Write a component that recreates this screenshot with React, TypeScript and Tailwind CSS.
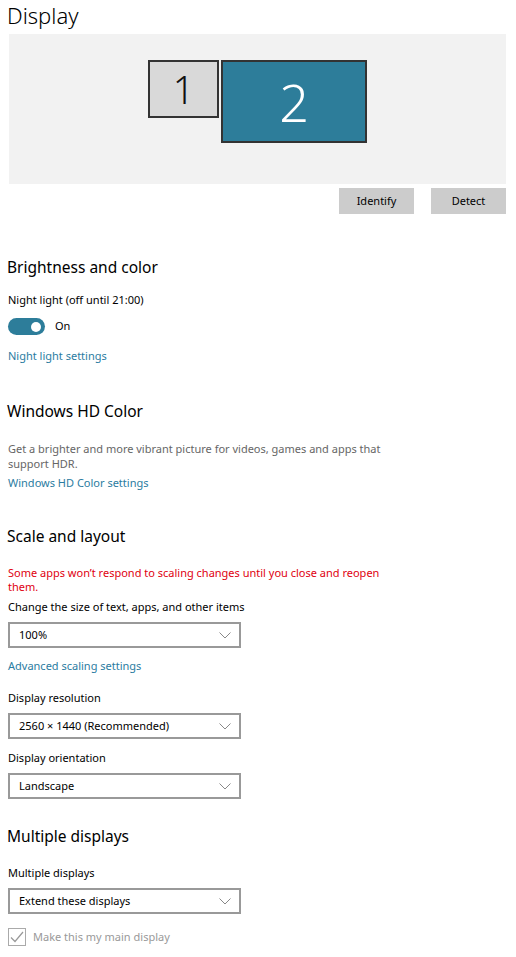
import React from "react";

const font = { fontFamily: '"Segoe UI", "Noto Sans", "Open Sans", sans-serif' };

function Chevron() {
  return (
    <svg width="12" height="7" viewBox="0 0 12 7" fill="none">
      <path d="M0.5 0.5 L6 6 L11.5 0.5" stroke="#888" strokeWidth="1" />
    </svg>
  );
}

function Dropdown({ value, mt }: { value: string; mt: string }) {
  return (
    <div
      className={`${mt} ml-[8px] w-[233px] h-[26px] border-2 border-[#999999] bg-white flex items-center justify-between pl-[9px] pr-[8px] text-[11px] text-black`}
    >
      <span>{value}</span>
      <Chevron />
    </div>
  );
}

export default function App() {
  return (
    <div className="w-[516px] h-[957px] bg-white text-black overflow-hidden" style={font}>
      <div className="h-[34px] pl-[7px] text-[22px] leading-[30px] font-light">Display</div>
      <div className="ml-[9px] w-[497px] h-[150px] bg-[#f2f2f2] flex items-start pt-[26px] pl-[139px] gap-[2px]">
        <div className="w-[71px] h-[58px] border-2 border-[#333333] bg-[#d9d9d9] flex items-center justify-center text-[38px] font-light leading-none text-[#111]">
          1
        </div>
        <div className="w-[146px] h-[83px] border-2 border-[#333333] bg-[#2d7d9a] flex items-center justify-center text-[52px] font-light leading-none text-white">
          2
        </div>
      </div>
      <div className="mt-[4px] h-[26px] flex justify-end pr-[10px] gap-[17px]">
        <div className="w-[75px] h-[26px] bg-[#cccccc] flex items-center justify-center text-[11px]">Identify</div>
        <div className="w-[75px] h-[26px] bg-[#cccccc] flex items-center justify-center text-[11px]">Detect</div>
      </div>

      <div className="mt-[38px] h-[30px] leading-[30px] pl-[7px] text-[15.5px]">Brightness and color</div>
      <div className="mt-[8px] h-[20px] leading-[20px] pl-[8px] text-[11px]">Night light (off until 21:00)</div>
      <div className="mt-[8px] h-[17px] flex items-center pl-[8px]">
        <div className="w-[37px] h-[17px] rounded-full bg-[#2d7d9a] flex items-center justify-end pr-[4px]">
          <div className="w-[10px] h-[10px] rounded-full bg-white" />
        </div>
        <span className="ml-[10px] text-[11px]">On</span>
      </div>
      <div className="mt-[11px] h-[20px] leading-[20px] pl-[8px] text-[11px] text-[#2b7ca1]">Night light settings</div>

      <div className="mt-[30px] h-[30px] leading-[30px] pl-[7px] text-[15.5px]">Windows HD Color</div>
      <div className="mt-[15px] pl-[8px] whitespace-nowrap text-[11px] leading-[15px] text-[#666666]">
        Get a brighter and more vibrant picture for videos, games and apps that
        <br />
        support HDR.
      </div>
      <div className="mt-[2px] h-[20px] leading-[20px] pl-[8px] text-[11px] text-[#2b7ca1]">Windows HD Color settings</div>

      <div className="mt-[28px] h-[30px] leading-[30px] pl-[7px] text-[15.5px]">Scale and layout</div>
      <div className="mt-[15px] pl-[8px] whitespace-nowrap text-[11px] leading-[14px] text-[#e00010]">
        Some apps won’t respond to scaling changes until you close and reopen
        <br />
        them.
      </div>
      <div className="mt-[3px] h-[20px] leading-[20px] pl-[8px] text-[11px]">Change the size of text, apps, and other items</div>
      <Dropdown value="100%" mt="mt-[5px]" />
      <div className="mt-[8px] h-[20px] leading-[20px] pl-[8px] text-[11px] text-[#2b7ca1]">Advanced scaling settings</div>
      <div className="mt-[12px] h-[20px] leading-[20px] pl-[8px] text-[11px]">Display resolution</div>
      <Dropdown value="2560 × 1440 (Recommended)" mt="mt-[5px]" />
      <div className="mt-[9px] h-[20px] leading-[20px] pl-[8px] text-[11px]">Display orientation</div>
      <Dropdown value="Landscape" mt="mt-[5px]" />

      <div className="mt-[22px] h-[30px] leading-[30px] pl-[7px] text-[15.5px]">Multiple displays</div>
      <div className="mt-[12px] h-[20px] leading-[20px] pl-[8px] text-[11px]">Multiple displays</div>
      <Dropdown value="Extend these displays" mt="mt-[5px]" />
      <div className="mt-[14px] h-[18px] flex items-center pl-[8px]">
        <div className="w-[18px] h-[18px] border border-[#aaaaaa] flex items-center justify-center">
          <svg width="14" height="12" viewBox="0 0 14 12" fill="none">
            <path d="M1 6.5 L5 10.5 L13 1" stroke="#999999" strokeWidth="1.2" />
          </svg>
        </div>
        <span className="ml-[7px] text-[11px] text-[#999999]">Make this my main display</span>
      </div>
    </div>
  );
}
